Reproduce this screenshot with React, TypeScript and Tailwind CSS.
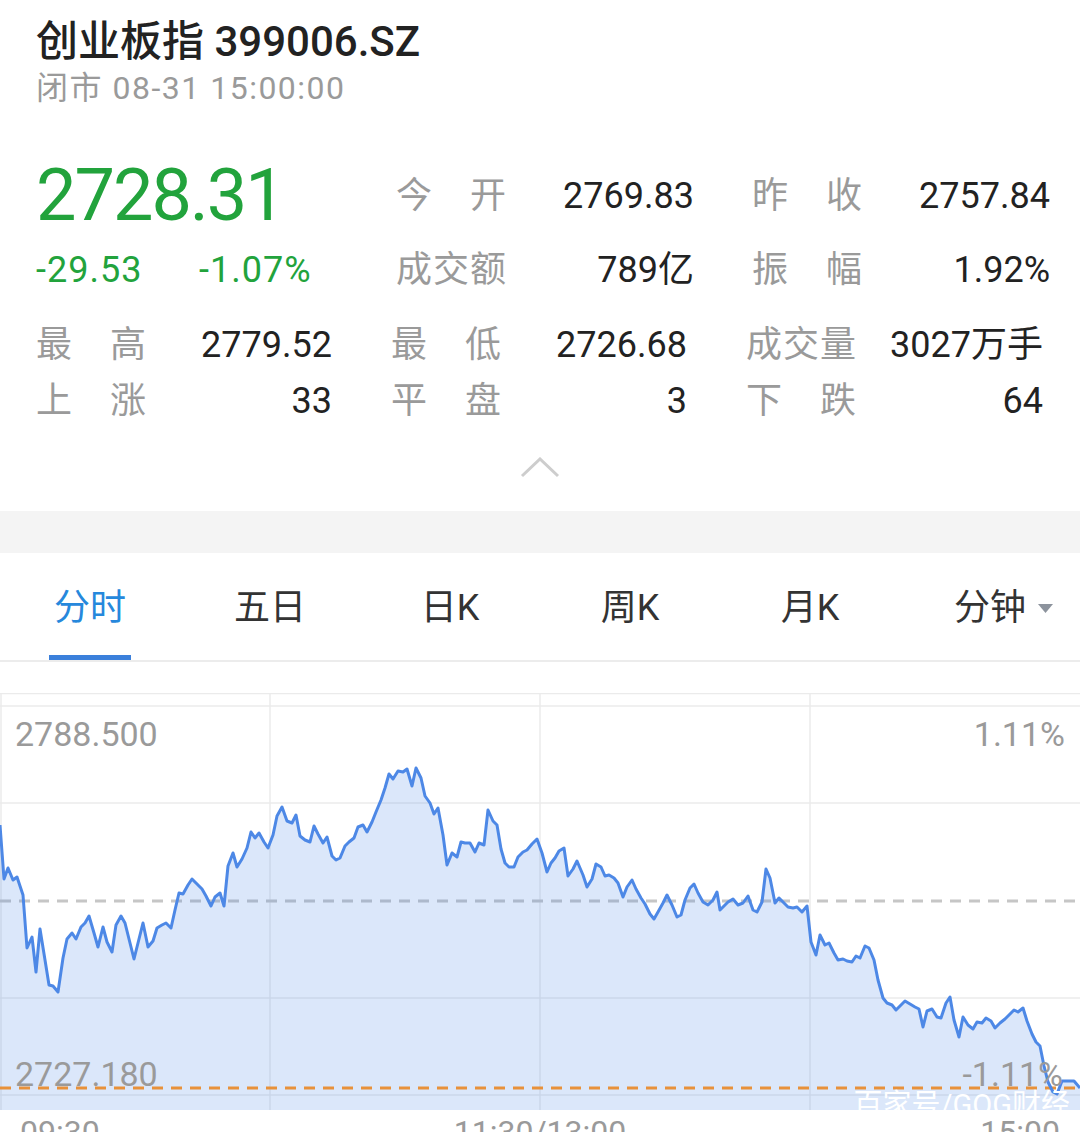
import React from "react";

const LINE =
  "0,825 4,879 8,868 13,880 17,877 23,895 27,948 32,937 36,972 40,929 45,960 49,985 53,986 58,992 63,958 67,939 72,933 76,939 81,927 85,923 89,916 94,933 98,947 103,927 107,942 112,952 116,925 121,916 125,923 129,939 134,959 138,943 143,923 148,947 153,941 157,928 162,925 166,923 171,928 175,910 179,893 183,894 188,885 192,879 197,884 202,889 206,896 211,906 215,897 220,893 224,906 228,866 233,853 237,867 242,859 247,848 251,832 255,838 259,833 264,842 268,848 273,835 277,816 282,807 287,821 292,823 296,815 300,836 305,840 310,842 314,826 318,834 323,843 327,837 332,856 336,860 340,858 345,846 349,842 354,838 358,827 " +
  "363,825 367,832 372,822 376,812 381,800 385,788 389,774 393,779 398,771 403,772 407,769 412,786 416,768 421,778 425,796 430,803 434,814 438,808 443,835 447,865 452,853 457,857 461,842 465,843 470,843 475,852 479,843 484,845 488,810 493,821 497,825 501,849 505,863 509,867 514,867 518,857 523,852 527,850 532,844 537,839 542,853 547,872 551,863 555,858 559,851 564,848 568,876 573,869 577,861 583,875 587,887 592,879 596,864 601,867 605,876 609,875 614,878 618,883 623,897 627,887 632,880 636,889 641,898 645,904 650,914 654,919 658,912 663,903 667,895 672,905 677,917 681,915 685,900 690,888 694,884 698,893 703,902 708,905 713,900 717,892 720,910 " +
  "724,906 728,902 733,899 738,905 743,903 748,896 753,910 757,912 762,902 766,869 770,878 775,903 779,898 784,903 788,907 793,908 797,907 802,912 807,906 811,942 816,955 820,935 825,945 829,943 834,953 838,960 843,959 847,961 852,962 856,956 860,958 865,946 869,948 874,960 878,980 883,998 887,1003 892,1005 896,1010 901,1005 905,1001 910,1004 915,1007 919,1009 923,1027 927,1011 932,1009 937,1017 941,1018 946,1003 950,997 954,1020 959,1037 963,1017 968,1025 973,1029 977,1022 982,1023 986,1018 991,1021 995,1028 1000,1023 1005,1019 1009,1015 1014,1010 1018,1012 1023,1008 1027,1021 1032,1034 1036,1042 1040,1046 1044,1066 1048,1082 1053,1092 1057,1094 1062,1081 1067,1081 1074,1081 1080,1088";

const Label = ({ text }: { text: string }) => (
  <div className="flex w-[110px] justify-between text-[#9a9a9a]">
    {text.split("").map((c, i) => (
      <span key={i}>{c}</span>
    ))}
  </div>
);

const Stat = ({ label, value, w }: { label: string; value: string; w: string }) => (
  <div className={`flex items-center justify-between ${w}`}>
    <Label text={label} />
    <span className="text-[#222]">{value}</span>
  </div>
);

const tabs = ["分时", "五日", "日K", "周K", "月K"];

const App = () => (
  <div className="w-[1080px] h-[1132px] overflow-hidden bg-white font-[Roboto,'Noto_Sans_CJK_SC',sans-serif]">
    <div className="pt-[18px] pl-[36px]">
      <div className="h-[48px] leading-[48px] text-[42px] font-medium text-[#222]">创业板指 399006.SZ</div>
      <div className="h-[44px] leading-[44px] text-[32px] tracking-[1.5px] text-[#9a9a9a]">闭市 08-31 15:00:00</div>
    </div>

    <div className="mt-[40px] flex pl-[36px] text-[36px]">
      <div className="w-[360px]">
        <div className="flex h-[92px] items-center text-[72px] leading-none tracking-[-2px] text-[#22a33c]">2728.31</div>
        <div className="flex h-[56px] items-center tracking-[1px] text-[#22a33c]">
          <span className="w-[163px]">-29.53</span>
          <span>-1.07%</span>
        </div>
      </div>
      <div>
        <div className="flex h-[92px] items-center gap-[58px]">
          <Stat label="今开" value="2769.83" w="w-[298px]" />
          <Stat label="昨收" value="2757.84" w="w-[298px]" />
        </div>
        <div className="flex h-[56px] items-center gap-[58px]">
          <Stat label="成交额" value="789亿" w="w-[298px]" />
          <Stat label="振幅" value="1.92%" w="w-[298px]" />
        </div>
      </div>
    </div>

    <div className="mt-[19px] pl-[36px] text-[36px]">
      <div className="flex h-[56px] items-center gap-[59px]">
        <Stat label="最高" value="2779.52" w="w-[296px]" />
        <Stat label="最低" value="2726.68" w="w-[296px]" />
        <Stat label="成交量" value="3027万手" w="w-[297px]" />
      </div>
      <div className="flex h-[56px] items-center gap-[59px]">
        <Stat label="上涨" value="33" w="w-[296px]" />
        <Stat label="平盘" value="3" w="w-[296px]" />
        <Stat label="下跌" value="64" w="w-[297px]" />
      </div>
    </div>

    <div className="flex h-[82px] justify-center pt-[28px]">
      <svg width="40" height="22" viewBox="0 0 40 22">
        <polyline points="2,19 20,2 38,19" fill="none" stroke="#cdcdcd" strokeWidth="3" />
      </svg>
    </div>

    <div className="h-[42px] bg-[#f4f4f4]" />

    <div className="grid grid-cols-6 border-b-2 border-[#ececec] text-[36px] text-[#333]">
      {tabs.map((t, i) => (
        <div key={t} className="flex flex-col items-center">
          <div className={`flex h-[102px] items-center pt-[8px] ${i === 0 ? "text-[#2688dc]" : ""}`}>{t}</div>
          <div className={`h-[5px] w-[82px] ${i === 0 ? "bg-[#3b80db]" : ""}`} />
        </div>
      ))}
      <div className="flex flex-col items-center">
        <div className="flex h-[102px] items-center gap-[12px] pt-[8px] pl-[27px]">
          <span>分钟</span>
          <svg width="15" height="9" viewBox="0 0 15 9">
            <polygon points="0,0 15,0 7.5,9" fill="#8c939d" />
          </svg>
        </div>
        <div className="h-[5px]" />
      </div>
    </div>

    <div className="h-[31px]" />

    <div className="relative h-[417px] overflow-hidden">
      <svg width="1080" height="417" viewBox="0 693 1080 417" className="block">
        <g stroke="#ebebeb" strokeWidth="1.5">
          <line x1="0" y1="693.5" x2="1080" y2="693.5" />
          <line x1="0" y1="706" x2="1080" y2="706" />
          <line x1="0" y1="803" x2="1080" y2="803" />
          <line x1="0" y1="998" x2="1080" y2="998" />
          <line x1="0" y1="1095" x2="1080" y2="1095" />
          <line x1="1" y1="693" x2="1" y2="1110" />
          <line x1="270" y1="693" x2="270" y2="1110" />
          <line x1="540" y1="693" x2="540" y2="1110" />
          <line x1="810" y1="693" x2="810" y2="1110" />
        </g>
        <line x1="0" y1="901" x2="1080" y2="901" stroke="#c6c6c6" strokeWidth="3" strokeDasharray="11 8" />
        <polygon points={`${LINE} 1080,1110 0,1110`} fill="#4d88e6" fillOpacity="0.2" />
        <line x1="0" y1="1088" x2="1080" y2="1088" stroke="#e8913a" strokeWidth="3" strokeDasharray="11 8" />
        <polyline points={LINE} fill="none" stroke="#4d88e6" strokeWidth="3" strokeLinejoin="round" />
      </svg>
      <span className="absolute left-[15px] top-[24px] text-[34px] leading-none text-[#9a9a9a]">2788.500</span>
      <span className="absolute right-[15px] top-[24px] text-[34px] leading-none text-[#9a9a9a]">1.11%</span>
      <span className="absolute left-[15px] top-[364px] text-[34px] leading-none text-[#9a9a9a]">2727.180</span>
      <span className="absolute right-[17px] top-[364px] text-[34px] leading-none text-[#9a9a9a]">-1.11%</span>
      <span className="absolute right-[10px] top-[398px] text-[29px] leading-none text-white">百家号/GOG财经</span>
    </div>

    <div className="flex justify-between px-[20px] pt-[2px] text-[32px] leading-[40px] text-[#9a9a9a]">
      <span>09:30</span>
      <span>11:30/13:00</span>
      <span>15:00</span>
    </div>
  </div>
);

export default App;
